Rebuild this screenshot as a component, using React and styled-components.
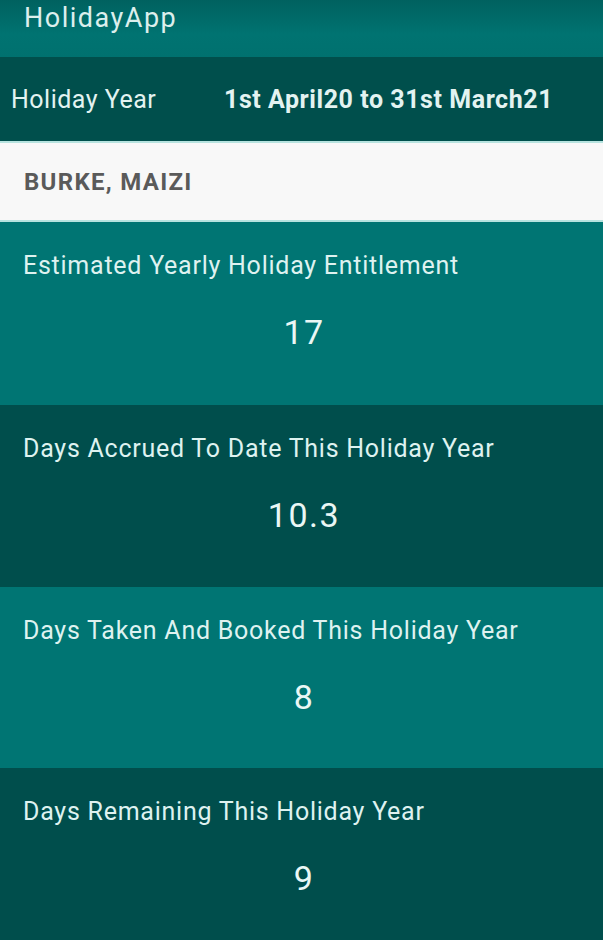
import React from "react";
import styled, { createGlobalStyle } from "styled-components";

const Global = createGlobalStyle`
  html, body { margin: 0; padding: 0; background: #004e4c; }
  body { font-family: Roboto, "Noto Sans", "Liberation Sans", sans-serif; }
`;

const Page = styled.div`
  width: 603px;
  height: 940px;
  overflow: hidden;
  display: flex;
  flex-direction: column;
`;

const AppBar = styled.header`
  height: 57px;
  background: linear-gradient(#00615f, #007371 60%, #00716f);
  display: flex;
  align-items: flex-start;
  padding: 3px 24px 0;
  box-sizing: border-box;
`;

const AppTitle = styled.h1`
  margin: 0;
  font-size: 27px;
  font-weight: 400;
  letter-spacing: 1.5px;
  line-height: 30px;
  color: #dcefed;
`;

const YearBar = styled.div`
  height: 84px;
  background: #004f4c;
  display: flex;
  align-items: center;
  padding: 0 11px;
  box-sizing: border-box;
  color: #e3f3f1;
  font-size: 25px;
`;

const YearLabel = styled.span`
  width: 213px;
  font-weight: 400;
  letter-spacing: 0.5px;
`;

const YearValue = styled.span`
  font-weight: 700;
  letter-spacing: 0.55px;
`;

const NameBar = styled.div`
  height: 81px;
  background: #f8f8f8;
  border-top: 2px solid #b7e3df;
  border-bottom: 2px solid #b7e3df;
  box-sizing: border-box;
  display: flex;
  align-items: center;
  padding: 0 24px;
  font-size: 24px;
  font-weight: 700;
  letter-spacing: 1.3px;
  color: #5a5a5a;
`;

const Stat = styled.section`
  height: ${(p) => p.$h}px;
  background: ${(p) => (p.$dark ? "#004e4c" : "#007573")};
  padding: 29px 23px 0;
  box-sizing: border-box;
  display: flex;
  flex-direction: column;
`;

const StatLabel = styled.div`
  font-size: 25px;
  line-height: 30px;
  letter-spacing: 0.75px;
  color: #def2f0;
`;

const StatValue = styled.div`
  margin-top: 31px;
  padding-left: 5px;
  text-align: center;
  font-size: 34px;
  line-height: 40px;
  letter-spacing: 1.5px;
  color: #eaf7f5;
`;

const stats = [
  { label: "Estimated Yearly Holiday Entitlement", value: "17", h: 183 },
  { label: "Days Accrued To Date This Holiday Year", value: "10.3", h: 182, dark: true },
  { label: "Days Taken And Booked This Holiday Year", value: "8", h: 181 },
  { label: "Days Remaining This Holiday Year", value: "9", h: 172, dark: true },
];

export default function App() {
  return (
    <>
      <Global />
      <Page>
        <AppBar>
          <AppTitle>HolidayApp</AppTitle>
        </AppBar>
        <YearBar>
          <YearLabel>Holiday Year</YearLabel>
          <YearValue>1st April20 to 31st March21</YearValue>
        </YearBar>
        <NameBar>BURKE, MAIZI</NameBar>
        {stats.map((s) => (
          <Stat key={s.label} $dark={s.dark} $h={s.h}>
            <StatLabel>{s.label}</StatLabel>
            <StatValue>{s.value}</StatValue>
          </Stat>
        ))}
      </Page>
    </>
  );
}
